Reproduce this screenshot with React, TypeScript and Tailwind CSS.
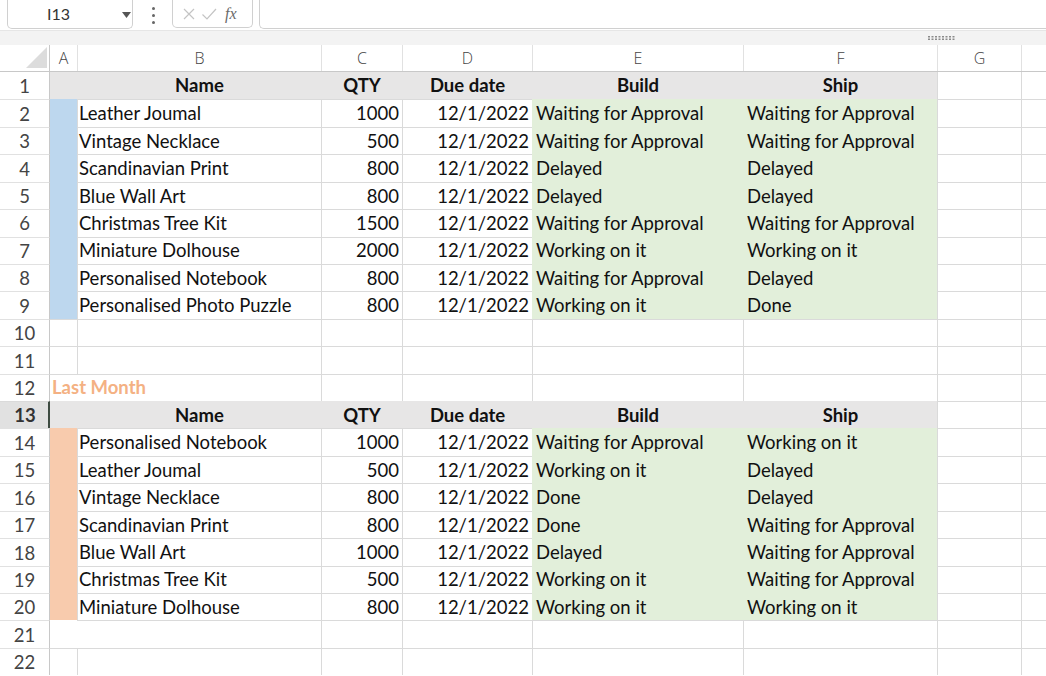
import React from "react";

type Fill = "none" | "head" | "green" | "blue" | "peach";

const fillCls: Record<Fill, string> = {
  none: "border-[#dadada]",
  head: "bg-[#e7e6e6] border-[#e7e6e6] font-bold",
  green: "bg-[#e2efda] border-[#e2efda]",
  blue: "bg-[#bdd7ee] border-[#bdd7ee]",
  peach: "bg-[#f8cbad] border-[#f8cbad]",
};

const widths = ["w-[27px]", "w-[244px]", "w-[81px]", "w-[130px]", "w-[211px]", "w-[194px]", "w-[84px]", "flex-1"];

type Align = "l" | "g" | "r" | "c";
const alignCls: Record<Align, string> = {
  l: "justify-start pl-[1px]",
  g: "justify-start pl-[3px]",
  r: "justify-end pr-[3px]",
  c: "justify-center",
};

interface CellDef {
  text?: string | number;
  fill?: Fill;
  align?: Align;
  noTop?: boolean;
  noLeft?: boolean;
}

const thisMonth: [string, number, string, string][] = [
  ["Leather Joumal", 1000, "Waiting for Approval", "Waiting for Approval"],
  ["Vintage Necklace", 500, "Waiting for Approval", "Waiting for Approval"],
  ["Scandinavian Print", 800, "Delayed", "Delayed"],
  ["Blue Wall Art", 800, "Delayed", "Delayed"],
  ["Christmas Tree Kit", 1500, "Waiting for Approval", "Waiting for Approval"],
  ["Miniature Dolhouse", 2000, "Working on it", "Working on it"],
  ["Personalised Notebook", 800, "Waiting for Approval", "Delayed"],
  ["Personalised Photo Puzzle", 800, "Working on it", "Done"],
];

const lastMonth: [string, number, string, string][] = [
  ["Personalised Notebook", 1000, "Waiting for Approval", "Working on it"],
  ["Leather Joumal", 500, "Working on it", "Delayed"],
  ["Vintage Necklace", 800, "Done", "Delayed"],
  ["Scandinavian Print", 800, "Done", "Waiting for Approval"],
  ["Blue Wall Art", 1000, "Delayed", "Waiting for Approval"],
  ["Christmas Tree Kit", 500, "Working on it", "Waiting for Approval"],
  ["Miniature Dolhouse", 800, "Working on it", "Working on it"],
];

function headerCells(): CellDef[] {
  return [
    { fill: "head" },
    { fill: "head", text: "Name", align: "c" },
    { fill: "head", text: "QTY", align: "c" },
    { fill: "head", text: "Due date", align: "c" },
    { fill: "head", text: "Build", align: "c" },
    { fill: "head", text: "Ship", align: "c" },
    {},
    {},
  ];
}

function itemCells(item: [string, number, string, string], side: Fill): CellDef[] {
  return [
    { fill: side },
    { text: item[0], align: "l" },
    { text: item[1], align: "r" },
    { text: "12/1/2022", align: "r" },
    { fill: "green", text: item[2], align: "g" },
    { fill: "green", text: item[3], align: "g" },
    {},
    {},
  ];
}

function emptyCells(): CellDef[] {
  return [{}, {}, {}, {}, {}, {}, {}, {}];
}

function buildRows(): CellDef[][] {
  const rows: CellDef[][] = [];
  rows.push(headerCells().map((c) => ({ ...c, noTop: true })));
  thisMonth.forEach((it) => rows.push(itemCells(it, "blue")));
  rows.push(emptyCells());
  rows.push(emptyCells());
  const r12 = emptyCells();
  r12[1] = { noLeft: true };
  rows.push(r12);
  rows.push(headerCells());
  lastMonth.forEach((it) => rows.push(itemCells(it, "peach")));
  const r21 = emptyCells();
  r21[0] = { noTop: true };
  r21[1] = { noLeft: true };
  rows.push(r21);
  rows.push(emptyCells());
  return rows;
}

function Cell({ def, i }: { def: CellDef; i: number }) {
  const fill = def.fill ?? "none";
  const top = def.noTop ? "" : "border-t";
  const left = i === 0 || def.noLeft ? "" : "border-l";
  return (
    <div
      className={`${widths[i]} ${top} ${left} ${fillCls[fill]} ${alignCls[def.align ?? "l"]} h-full flex items-center overflow-hidden whitespace-nowrap`}
    >
      {def.text !== undefined && <span className="pt-[1px]">{def.text}</span>}
    </div>
  );
}

function RowHeader({ n }: { n: number }) {
  if (n === 13) {
    return (
      <div className="w-[50px] h-full flex items-center justify-center bg-[#e1e1e1] border-t border-t-[#dadada] border-r-2 border-r-[#3d4b41] font-bold text-[#333]">
        <span className="pt-[2px] pl-[2px]">{n}</span>
      </div>
    );
  }
  return (
    <div
      className={`w-[50px] h-full flex items-center justify-center border-r border-r-[#c8c8c8] ${n === 1 ? "" : "border-t border-t-[#e1e1e1]"} text-[#444]`}
    >
      <span className="pt-[2px]">{n}</span>
    </div>
  );
}

function NameBox() {
  return (
    <div className="ml-[7px] w-[126px] h-[29px] rounded-b-[5px] border border-t-0 border-[#d0d0d0] bg-white flex items-center relative">
      <span className="ml-[39px] text-[16px] text-[#333]">I13</span>
      <svg className="absolute left-[114px] top-[12px]" width="9" height="6" viewBox="0 0 9 6">
        <path d="M0 0 L9 0 L4.5 6 Z" fill="#555" />
      </svg>
    </div>
  );
}

function Dots() {
  return (
    <div className="w-[38px] flex flex-col items-center gap-[4px] pt-[1px]">
      <span className="w-[3px] h-[3px] rounded-full bg-[#666]" />
      <span className="w-[3px] h-[3px] rounded-full bg-[#666]" />
      <span className="w-[3px] h-[3px] rounded-full bg-[#666]" />
    </div>
  );
}

function FxBox() {
  return (
    <div className="w-[81px] h-[28px] rounded-b-[5px] border border-t-0 border-[#d0d0d0] bg-white flex items-center pl-[9px] gap-[5px]">
      <svg width="14" height="14" viewBox="0 0 14 14">
        <path d="M2 2 L12 12 M12 2 L2 12" stroke="#c4c4c4" strokeWidth="1.2" fill="none" />
      </svg>
      <svg width="16" height="14" viewBox="0 0 16 14">
        <path d="M1.5 7.5 L6 12 L15 2" stroke="#c4c4c4" strokeWidth="1.2" fill="none" />
      </svg>
      <span className="ml-[3px] text-[16px] italic text-[#6a6a6a] font-['Liberation_Serif',serif]">fx</span>
    </div>
  );
}

function Grip() {
  const dots = [];
  for (let r = 0; r < 2; r++) {
    for (let c = 0; c < 8; c++) {
      dots.push(<rect key={`${r}-${c}`} x={c * 3.5} y={r * 2.5} width="2" height="1.5" fill="#8a8a8a" />);
    }
  }
  return (
    <svg width="28" height="4" viewBox="0 0 28 4">
      {dots}
    </svg>
  );
}

export default function App() {
  const rows = buildRows();
  const letters = ["A", "B", "C", "D", "E", "F", "G", ""];

  return (
    <div className="w-[1046px] h-[676px] overflow-hidden bg-white font-['Lato','Open_Sans',sans-serif] text-[18.5px] text-[#111]">
      {/* Formula bar */}
      <div className="h-[30px] flex items-start bg-white">
        <NameBox />
        <div className="h-[29px] flex items-center ml-[1px]">
          <Dots />
        </div>
        <FxBox />
        <div className="ml-[6px] flex-1 h-[29px] rounded-bl-[5px] border border-t-0 border-r-0 border-[#d0d0d0] bg-white" />
      </div>

      {/* Grip band */}
      <div className="h-[15px] bg-[#f3f3f3] border-t border-[#e6e6e6] flex items-center justify-end pr-[90px]">
        <Grip />
      </div>

      {/* Column headers */}
      <div className="h-[27px] flex border-b border-[#c8c8c8] text-[#444] font-['Open_Sans',sans-serif] text-[16px] font-light">
        <div className="w-[50px] h-full border-r border-[#c8c8c8] flex items-end justify-end pr-[2px] pb-[3px]">
          <svg width="21" height="21" viewBox="0 0 21 21">
            <path d="M21 0 L21 21 L0 21 Z" fill="#dcdcdc" />
          </svg>
        </div>
        {letters.map((l, i) => (
          <div
            key={i}
            className={`${widths[i]} h-full flex items-center justify-center ${i === 0 ? "" : "border-l border-[#e1e1e1]"}`}
          >
            {l}
          </div>
        ))}
      </div>

      {/* Grid rows */}
      {rows.map((cells, r) => (
        <div key={r} className="h-[27.43px] flex">
          <RowHeader n={r + 1} />
          {r + 1 === 12 ? (
            <>
              <div className="w-[27px] h-full border-t border-[#dadada] flex items-center whitespace-nowrap overflow-visible pl-[2px] relative z-10">
                <span className="pt-[1px] font-bold text-[#f4b183]">Last Month</span>
              </div>
              {cells.slice(1).map((c, i) => (
                <Cell key={i + 1} def={c} i={i + 1} />
              ))}
            </>
          ) : (
            cells.map((c, i) => <Cell key={i} def={c} i={i} />)
          )}
        </div>
      ))}
    </div>
  );
}
